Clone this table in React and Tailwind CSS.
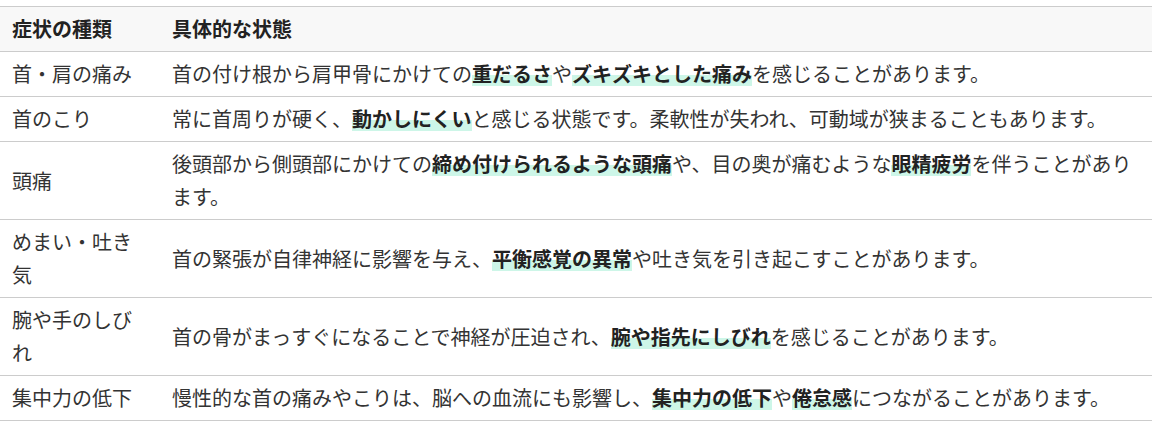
import React from "react";

const M = ({ children }) => (
  <strong className="font-bold text-[#222] bg-[linear-gradient(transparent_54%,#cdf6e8_54%,#cdf6e8_92%,transparent_92%)]">
    {children}
  </strong>
);

const rows = [
  ["首・肩の痛み", <>首の付け根から肩甲骨にかけての<M>重だるさ</M>や<M>ズキズキとした痛み</M>を感じることがあります。</>],
  ["首のこり", <>常に首周りが硬く、<M>動かしにくい</M>と感じる状態です。柔軟性が失われ、可動域が狭まることもあります。</>],
  ["頭痛", <>後頭部から側頭部にかけての<M>締め付けられるような頭痛</M>や、目の奥が痛むような<M>眼精疲労</M>を伴うことがあります。</>],
  ["めまい・吐き気", <>首の緊張が自律神経に影響を与え、<M>平衡感覚の異常</M>や吐き気を引き起こすことがあります。</>],
  ["腕や手のしびれ", <>首の骨がまっすぐになることで神経が圧迫され、<M>腕や指先にしびれ</M>を感じることがあります。</>],
  ["集中力の低下", <>慢性的な首の痛みやこりは、脳への血流にも影響し、<M>集中力の低下</M>や<M>倦怠感</M>につながることがあります。</>],
];

export default function App() {
  return (
    <div className="w-[1152px] h-[429px] bg-white pt-[6px] font-['Noto_Sans_CJK_JP',sans-serif] text-[20px] leading-[33px] text-[#333]">
      <table className="w-full table-fixed border-collapse border-t border-[#cccccc]">
        <colgroup>
          <col className="w-[160px]" />
          <col />
        </colgroup>
        <thead>
          <tr className="bg-[#f8f8f8] border-b border-[#cccccc]">
            <th className="text-left font-bold text-[#222] pl-3 pr-[14px] pt-[5px] pb-[6px] align-middle">症状の種類</th>
            <th className="text-left font-bold text-[#222] pl-3 pr-3 pt-[5px] pb-[6px] align-middle">具体的な状態</th>
          </tr>
        </thead>
        <tbody>
          {rows.map(([a, b], i) => (
            <tr key={i} className="border-b border-[#cccccc]">
              <td className="pl-3 pr-[14px] pt-[5px] pb-[6px] align-middle">{a}</td>
              <td className="pl-3 pr-3 pt-[5px] pb-[6px] align-middle">{b}</td>
            </tr>
          ))}
        </tbody>
      </table>
    </div>
  );
}
